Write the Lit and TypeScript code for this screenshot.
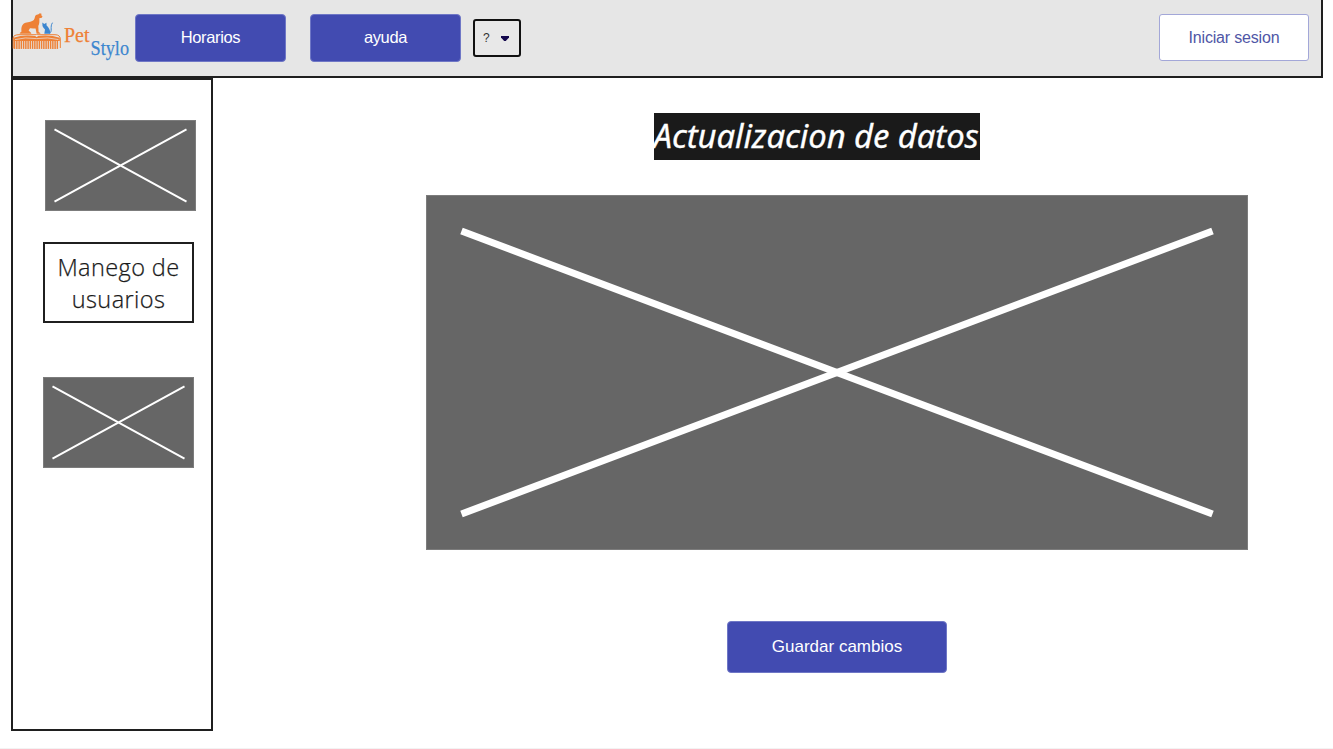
import { LitElement, html, css, svg } from "lit";
import { customElement, property } from "lit/decorators.js";

/** Grey box crossed by two diagonals, standing in for a picture. */
@customElement("image-placeholder")
class ImagePlaceholder extends LitElement {
  @property({ type: Number }) w = 151;
  @property({ type: Number }) h = 91;
  @property({ type: Number }) insetX = 9.5;
  @property({ type: Number }) insetY = 9.3;
  @property({ type: Number }) stroke = 2;

  static styles = css`
    :host { display: block; }
    svg { display: block; }
    .box { fill: #666; stroke: #7c7c7c; stroke-width: 1; }
    .cross { stroke: #fff; fill: none; }
  `;

  render() {
    const { w, h, insetX: a, insetY: b } = this;
    return html`<svg width=${w} height=${h} viewBox="0 0 ${w} ${h}">
      <rect class="box" x="0.5" y="0.5" width=${w - 1} height=${h - 1}></rect>
      <path class="cross" stroke-width=${this.stroke}
        d="M${a} ${b}L${w - a} ${h - b}M${w - a} ${b}L${a} ${h - b}"></path>
    </svg>`;
  }
}

@customElement("pet-logo")
class PetLogo extends LitElement {
  static styles = css`
    :host { display: block; }
    svg { display: block; overflow: visible; }
    .orange { fill: #ee8136; }
    .blue { fill: #3c86cf; }
    .line { fill: none; stroke: #ee8136; }
    .tail { fill: none; stroke: #3c86cf; stroke-width: 1; stroke-linecap: round; }
    .word { font-family: "Liberation Serif", serif; stroke-width: 0.25; }
    .pet { font-size: 22px; stroke: #ee8136; }
    .stylo { font-size: 22px; stroke: #3c86cf; }
  `;

  render() {
    const teeth = Array.from({ length: 20 }, (_, i) => 2.6 + i * 2.25);
    return html`<svg width="121" height="76" viewBox="0 0 121 76">
      <path class="orange" d="M7.500 33.200L9.500 31.500C9 27.500 10 24 13.500 22.800C17 21.800 20 21.800 21.800 20C23 18.500 22.600 16.300 24 15L26.500 14.300L27.800 13.200L29.500 13.800L29.300 15.300L30.500 16.400L29.800 17.800L27.300 18.300C27.400 21 27.700 23.500 26.300 26L26.600 32L28.300 33V33.700H24.600L23.600 28.500C21.500 28.500 19.500 28 18 28.200L16.600 30.500L19.200 33V33.700H8.500Z"></path>
      <path class="blue" d="M30.300 22.500L32.300 24L34.400 22.800L34.600 25.500C36.500 27.500 38.600 30 38.300 33.700H32.300L33 29.500C32.300 28.500 31 27.500 30.500 26Z"></path>
      <path class="tail" d="M37.800 33C41 31.500 37.500 27 40.300 23"></path>
      <path class="line" stroke-width="1" d="M1.200 48.500V38C1.200 35.500 4 34.700 7 34.700H43C46.500 34.700 48.300 36.300 48.300 39V48"></path>
      <path class="orange" d="M1.500 37.800Q12 34.200 24.500 36.300Q37 34.200 47.800 37.800V41H1.500Z"></path>
      <path d="M3 39.600Q13 36.800 24.500 38.600Q36 36.800 46.500 39.600" fill="none" stroke="#e6e6e6" stroke-width="0.700"></path>
      <circle cx="24.700" cy="35.800" r="1.100" fill="#e6e6e6"></circle>
      ${teeth.map((x) => svg`<path class="line" stroke-width="1.450" d="M${x} 40V48.900"></path>`)}
      <text class="word orange pet" x="52" y="41.800" textLength="25.500" lengthAdjust="spacingAndGlyphs">Pet</text>
      <text class="word blue stylo" x="78.500" y="54.800" textLength="38.500" lengthAdjust="spacingAndGlyphs">Stylo</text>
    </svg>`;
  }
}

@customElement("app-root")
class AppRoot extends LitElement {
  static styles = css`
    :host {
      display: block;
      box-sizing: border-box;
      height: 749px;
      background: #fff;
      border-bottom: 1px solid #f3f3f3;
      overflow: hidden;
      font-family: "Liberation Sans", Arial, sans-serif;
      color: #1a1a1a;
    }
    * { box-sizing: border-box; }
    button { font: inherit; margin: 0; padding: 0; flex: none; }
    .header {
      display: flex;
      align-items: flex-start;
      height: 78px;
      margin: 0 10px 0 11px;
      background: #e6e6e6;
      border: 2px solid #1f1f1f;
      border-top: 0;
    }
    .logo { margin: 0 2px 0 -1px; width: 121px; }
    .btn {
      height: 48px;
      margin-top: 14px;
      width: 151px;
      background: #424bb1;
      border: 1px solid #6f77c6;
      border-radius: 4px;
      color: #fff;
      font-size: 16.500px;
      letter-spacing: -0.350px;
      padding-bottom: 2px;
    }
    .help { margin-left: 24px; }
    .select {
      display: flex;
      align-items: center;
      justify-content: space-between;
      width: 48px;
      height: 38px;
      margin: 19px 0 0 12px;
      padding: 0 10px 0 8px;
      border: 2px solid #111;
      border-radius: 3px;
      background: #e8e8e8;
      font-size: 12px;
      color: #333;
    }
    .login {
      width: 150px;
      height: 47px;
      margin: 14px 12px 0 auto;
      background: #fff;
      border: 1.500px solid #a3a7d8;
      border-radius: 3px;
      color: #5056a6;
      font-size: 16px;
      letter-spacing: -0.180px;
    }
    .body { display: flex; height: 653px; margin-left: 11px; }
    .side {
      display: flex;
      flex-direction: column;
      align-items: flex-start;
      width: 202px;
      padding: 40px 0 0 30px;
      border: 2px solid #1f1f1f;
    }
    .first { margin-left: 2px; }
    .users {
      display: flex;
      align-items: center;
      justify-content: center;
      width: 151px;
      height: 81px;
      margin: 31px 0 54px;
      border: 2px solid #1f1f1f;
      text-align: center;
      font: 300 23.500px/32px "Open Sans", sans-serif;
      letter-spacing: 0.400px;
      -webkit-text-stroke: 0.250px #1a1a1a;
    }
    .main {
      display: flex;
      flex-direction: column;
      align-items: center;
      flex: 1;
      padding: 35px 0 0 127px;
      width: 0;
    }
    .title {
      width: 326px;
      height: 47px;
      margin: 0 40px 35px 0;
      background: #1a1a1a;
      color: #fff;
      font: italic 400 32.900px/45px "Noto Sans", sans-serif;
      letter-spacing: -0.090px;
      -webkit-text-stroke: 0.300px #fff;
      white-space: nowrap;
    }
    .save {
      width: 220px;
      height: 52px;
      margin: 71px 0 0 1px;
      font-size: 17px;
      letter-spacing: 0;
      padding: 0;
    }
  `;

  render() {
    return html`
      <header class="header">
        <pet-logo class="logo"></pet-logo>
        <button class="btn">Horarios</button>
        <button class="btn help">ayuda</button>
        <button class="select">
          <span>?</span>
          <svg width="8" height="5" viewBox="0 0 8 5"><path d="M0 0H8V1.500L4.800 5H3.200L0 1.500Z" fill="#14084d"></path></svg>
        </button>
        <button class="login">Iniciar sesion</button>
      </header>
      <div class="body">
        <nav class="side">
          <image-placeholder class="first"></image-placeholder>
          <div class="users">Manego de<br />usuarios</div>
          <image-placeholder></image-placeholder>
        </nav>
        <main class="main">
          <div class="title">Actualizacion de datos</div>
          <image-placeholder .w=${822} .h=${355} .insetX=${35.5} .insetY=${36} .stroke=${7}></image-placeholder>
          <button class="btn save">Guardar cambios</button>
        </main>
      </div>
    `;
  }
}
